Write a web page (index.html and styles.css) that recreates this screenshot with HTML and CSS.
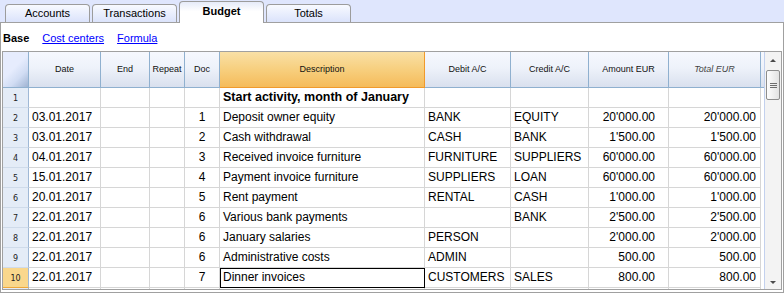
FILE: index.html
```html
<!DOCTYPE HTML>
<html>
<head>
	<title>Budget</title>
	<link rel="stylesheet" href="styles.css">
</head>
<body>
	<div class="tabs">
		<div class="tab">Accounts</div>
		<div class="tab">Transactions</div>
		<div class="tab tab-on">Budget</div>
		<div class="tab">Totals</div>
	</div>
	<div class="panel">
		<div class="views">
			<span class="view-on">Base</span>
			<a href="#">Cost centers</a>
			<a href="#">Formula</a>
		</div>
		<div class="sheet">
			<div class="grid">
				<div class="fila cabecera">
					<div class="c esquina"></div>
					<div class="c">Date</div>
					<div class="c">End</div>
					<div class="c">Repeat</div>
					<div class="c">Doc</div>
					<div class="c col-on">Description</div>
					<div class="c">Debit A/C</div>
					<div class="c">Credit A/C</div>
					<div class="c">Amount EUR</div>
					<div class="c total">Total EUR</div>
					<div class="c resto"></div>
				</div>
				<div class="fila">
					<div class="c num">1</div>
					<div class="c"></div>
					<div class="c"></div>
					<div class="c"></div>
					<div class="c doc"></div>
					<div class="c titulo">Start activity, month of January</div>
					<div class="c"></div>
					<div class="c"></div>
					<div class="c importe"></div>
					<div class="c suma"></div>
					<div class="c resto"></div>
				</div>
				<div class="fila">
					<div class="c num">2</div>
					<div class="c">03.01.2017</div>
					<div class="c"></div>
					<div class="c"></div>
					<div class="c doc">1</div>
					<div class="c">Deposit owner equity</div>
					<div class="c">BANK</div>
					<div class="c">EQUITY</div>
					<div class="c importe">20'000.00</div>
					<div class="c suma">20'000.00</div>
					<div class="c resto"></div>
				</div>
				<div class="fila">
					<div class="c num">3</div>
					<div class="c">03.01.2017</div>
					<div class="c"></div>
					<div class="c"></div>
					<div class="c doc">2</div>
					<div class="c">Cash withdrawal</div>
					<div class="c">CASH</div>
					<div class="c">BANK</div>
					<div class="c importe">1'500.00</div>
					<div class="c suma">1'500.00</div>
					<div class="c resto"></div>
				</div>
				<div class="fila">
					<div class="c num">4</div>
					<div class="c">04.01.2017</div>
					<div class="c"></div>
					<div class="c"></div>
					<div class="c doc">3</div>
					<div class="c">Received invoice furniture</div>
					<div class="c">FURNITURE</div>
					<div class="c">SUPPLIERS</div>
					<div class="c importe">60'000.00</div>
					<div class="c suma">60'000.00</div>
					<div class="c resto"></div>
				</div>
				<div class="fila">
					<div class="c num">5</div>
					<div class="c">15.01.2017</div>
					<div class="c"></div>
					<div class="c"></div>
					<div class="c doc">4</div>
					<div class="c">Payment invoice furniture</div>
					<div class="c">SUPPLIERS</div>
					<div class="c">LOAN</div>
					<div class="c importe">60'000.00</div>
					<div class="c suma">60'000.00</div>
					<div class="c resto"></div>
				</div>
				<div class="fila">
					<div class="c num">6</div>
					<div class="c">20.01.2017</div>
					<div class="c"></div>
					<div class="c"></div>
					<div class="c doc">5</div>
					<div class="c">Rent payment</div>
					<div class="c">RENTAL</div>
					<div class="c">CASH</div>
					<div class="c importe">1'000.00</div>
					<div class="c suma">1'000.00</div>
					<div class="c resto"></div>
				</div>
				<div class="fila">
					<div class="c num">7</div>
					<div class="c">22.01.2017</div>
					<div class="c"></div>
					<div class="c"></div>
					<div class="c doc">6</div>
					<div class="c">Various bank payments</div>
					<div class="c"></div>
					<div class="c">BANK</div>
					<div class="c importe">2'500.00</div>
					<div class="c suma">2'500.00</div>
					<div class="c resto"></div>
				</div>
				<div class="fila">
					<div class="c num">8</div>
					<div class="c">22.01.2017</div>
					<div class="c"></div>
					<div class="c"></div>
					<div class="c doc">6</div>
					<div class="c">January salaries</div>
					<div class="c">PERSON</div>
					<div class="c"></div>
					<div class="c importe">2'000.00</div>
					<div class="c suma">2'000.00</div>
					<div class="c resto"></div>
				</div>
				<div class="fila">
					<div class="c num">9</div>
					<div class="c">22.01.2017</div>
					<div class="c"></div>
					<div class="c"></div>
					<div class="c doc">6</div>
					<div class="c">Administrative costs</div>
					<div class="c">ADMIN</div>
					<div class="c"></div>
					<div class="c importe">500.00</div>
					<div class="c suma">500.00</div>
					<div class="c resto"></div>
				</div>
				<div class="fila">
					<div class="c num num-on">10</div>
					<div class="c">22.01.2017</div>
					<div class="c"></div>
					<div class="c"></div>
					<div class="c doc">7</div>
					<div class="c celda-on">Dinner invoices</div>
					<div class="c">CUSTOMERS</div>
					<div class="c">SALES</div>
					<div class="c importe">800.00</div>
					<div class="c suma">800.00</div>
					<div class="c resto"></div>
				</div>
				<div class="fila">
					<div class="c num"></div>
					<div class="c"></div>
					<div class="c"></div>
					<div class="c"></div>
					<div class="c"></div>
					<div class="c"></div>
					<div class="c"></div>
					<div class="c"></div>
					<div class="c"></div>
					<div class="c"></div>
					<div class="c resto"></div>
				</div>
			</div>
			<div class="scroll">
				<div class="flecha"><span class="arriba"></span></div>
				<div class="barra"><span class="agarre"></span></div>
				<div class="pista"></div>
				<div class="flecha"><span class="abajo"></span></div>
			</div>
		</div>
	</div>
</body>
</html>
```

FILE: styles.css
```css
*, *::after, *::before{
	box-sizing: border-box;
	margin: 0;
	padding: 0;
}
html, body{
	width: 100%;
	height: 100%;
}
body{
	background: #fff;
	font-family: "Liberation Sans", Arial, sans-serif;
	color: #000;
	overflow: hidden;
}

/* pestañas */
.tabs{
	display: flex;
	align-items: flex-end;
	gap: 2px;
	height: 23px;
	padding-left: 5px;
	background: #dfe6fd;
	border-bottom: 1px solid #a0a0a0;
}
.tab{
	width: 85px;
	height: 18px;
	border: 1px solid #9c9c9c;
	border-bottom: none;
	border-radius: 4px 4px 0 0;
	background: linear-gradient(#f8faff, #dbe3fb);
	font-size: 11px;
	line-height: 17px;
	text-align: center;
}
.tab-on{
	height: 22px;
	margin-bottom: -1px;
	background: linear-gradient(#e6ebf9, #fff 45%);
	font-weight: bold;
	line-height: 19px;
}

/* panel */
.panel{
	height: 270px;
	border: 1px solid #a0a0a0;
	border-top: none;
	padding: 0 1px 1px 1px;
}
.views{
	display: flex;
	gap: 13px;
	height: 28px;
	padding: 8px 0 0 1px;
	font-size: 11px;
	line-height: 14px;
}
.views a{
	color: #0000ff;
	text-decoration: underline;
}
.view-on{font-weight: bold;}

.sheet{
	display: flex;
	height: 239px;
	border: 1px solid #a0a0a0;
	overflow: hidden;
}
.grid{
	flex: 1;
	overflow: hidden;
}

/* filas */
.fila{
	display: grid;
	grid-template-columns: 26px 72px 49px 35px 35px 205px 86px 78px 80px 92px 1fr;
	height: 20px;
}
.c{
	height: 20px;
	border-right: 1px solid #d6d6d6;
	border-bottom: 1px solid #d6d6d6;
	padding: 0 3px;
	font-size: 12px;
	line-height: 19px;
	white-space: nowrap;
	overflow: hidden;
}
.doc{text-align: center;}
.importe{text-align: right; padding-right: 13px;}
.suma{text-align: right; padding-right: 4px;}
.titulo{font-weight: bold; font-size: 12.5px;}
.resto{border: none;}
.num{
	background: #e4ecf7;
	border-right-color: #9fb8d6;
	border-bottom-color: #cfdbea;
	font-family: "DejaVu Sans", sans-serif;
	font-size: 8px;
	text-align: center;
	color: #222;
	padding: 1px 0 0 0;
}
.num-on{
	background: #f9d78c;
	border-bottom-color: #eea73a;
}
.celda-on{
	border-right-color: #000;
	border-bottom-color: #000;
	box-shadow: inset 1px 1px 0 #000;
}

/* cabecera */
.cabecera{height: 36px;}
.cabecera .c{
	display: flex;
	align-items: center;
	justify-content: center;
	height: 36px;
	background: linear-gradient(#f6f8fe, #eef2fa 45%, #d9e0ee);
	border-right-color: #8fb0cf;
	border-bottom-color: #8fb0cf;
	font-size: 9px;
	color: #111;
	padding: 0;
}
.cabecera .esquina{
	background: linear-gradient(135deg, #e6ecfd 45%, #d0dcf3 70%, #9fb3d2);
}
.cabecera .col-on{
	background: linear-gradient(#f9e0a6, #f7cf7e 50%, #f5bb5a);
	border-right-color: #f09a2c;
	border-bottom-color: #f09a2c;
}
.cabecera .total{
	font-style: italic;
	color: #444;
}
.cabecera .resto{
	border-right: none;
	border-bottom: 1px solid #8fb0cf;
}

/* barra de desplazamiento */
.scroll{
	display: flex;
	flex-direction: column;
	width: 17px;
	border-left: 1px solid #c3d1ee;
	background: #f3f3f3;
}
.flecha{
	display: flex;
	align-items: center;
	justify-content: center;
	height: 17px;
}
.arriba{
	border-left: 3px solid transparent;
	border-right: 3px solid transparent;
	border-bottom: 3px solid #4a4a4a;
}
.abajo{
	border-left: 3px solid transparent;
	border-right: 3px solid transparent;
	border-top: 3px solid #4a4a4a;
	margin-top: 4px;
}
.barra{
	display: flex;
	align-items: center;
	justify-content: center;
	height: 30px;
	margin: 1px 1px 0 1px;
	border: 1px solid #8d8d8d;
	border-radius: 2px;
	background: linear-gradient(to right, #fdfdfd, #e2e2e2);
}
.agarre{
	width: 7px;
	height: 5px;
	border-top: 1px solid #6d6d6d;
	border-bottom: 1px solid #6d6d6d;
	background: linear-gradient(transparent 1px, #6d6d6d 1px, #6d6d6d 2px, transparent 2px);
}
.pista{flex: 1;}
```
